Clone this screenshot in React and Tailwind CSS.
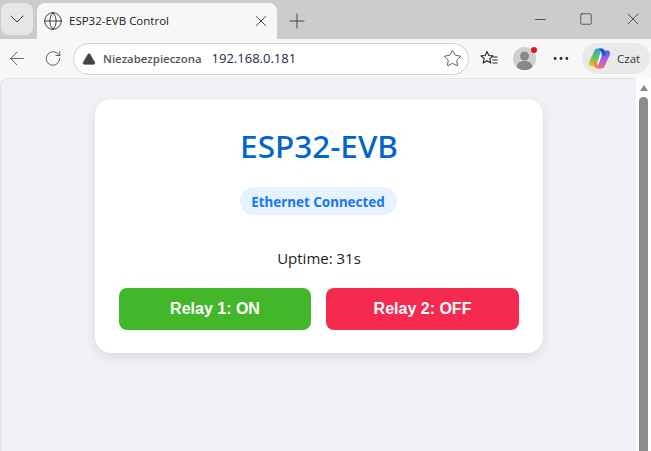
import { ChevronDown, Globe, X, Plus, Minus, Square, ArrowLeft, RotateCw, Star, TriangleAlert, Ellipsis } from 'lucide-react';

const ui = "font-['Open_Sans','Noto_Sans',sans-serif]";

function FavoritesIcon() {
  return (
    <svg width="20" height="20" viewBox="0 0 20 20" fill="none" stroke="#222" strokeWidth="1.1">
      <path d="M8 2.500l1.800 4 4.200.4-3.200 2.800 1 4.300L8 11.800l-3.800 2.200 1-4.300L2 6.900l4.200-.4z" strokeLinejoin="round" />
      <path d="M13.500 8h5M13.500 11h5M13.500 14h5" />
    </svg>
  );
}

function ProfileIcon() {
  return (
    <div className="relative w-[23px] h-[23px]">
      <svg width="23" height="23" viewBox="0 0 23 23">
        <circle cx="11.500" cy="11.500" r="11.500" fill="#d2d0ce" />
        <circle cx="11.500" cy="9" r="4.500" fill="#8a8886" />
        <path d="M3.500 20c1-4.500 4-6 8-6s7 1.500 8 6a11.500 11.500 0 0 1-16 0z" fill="#8a8886" />
      </svg>
      <div className="absolute top-0 right-[-1px] w-[6px] h-[6px] rounded-full bg-[#e81123]" />
    </div>
  );
}

function CopilotIcon() {
  return (
    <svg width="23" height="23" viewBox="0 0 23 23">
      <defs>
        <linearGradient id="cpA" x1="0.3" y1="0" x2="0.3" y2="1">
          <stop offset="0" stopColor="#22a6d8" />
          <stop offset="0.55" stopColor="#6cc850" />
          <stop offset="1" stopColor="#f3c62d" />
        </linearGradient>
        <linearGradient id="cpB" x1="0.4" y1="0" x2="0.6" y2="1">
          <stop offset="0" stopColor="#2a6fe8" />
          <stop offset="0.5" stopColor="#b45be0" />
          <stop offset="1" stopColor="#f0707a" />
        </linearGradient>
      </defs>
      <path d="M6.500 3.500C7 2.200 8 1.500 9.500 1.500h4L9.500 16c-.5 2-1.700 3.500-3.500 3.500H3.500C1.500 19.500.5 17.500 1 15.500z" fill="url(#cpA)" />
      <path d="M16.500 19.500c-.5 1.300-1.500 2-3 2h-4L13.500 7c.5-2 1.700-3.500 3.500-3.500h2.500c2 0 3 2 2.500 4z" fill="url(#cpB)" />
      <path d="M10.500 1.500h3c1.600 0 2.600.8 3 2.200L18 8.500h-3.500l-1.300-3.800c-.4-1.200-1.200-2.400-2.700-3.200z" fill="#1b56d8" />
      <path d="M12.500 21.500h-3c-1.600 0-2.600-.8-3-2.200L5 14.500h3.500l1.300 3.800c.4 1.200 1.200 2.400 2.700 3.200z" fill="#f58a3c" />
      <path d="M13 8l-2.800 8" stroke="#ffffff" strokeWidth="1.600" strokeLinecap="round" />
    </svg>
  );
}

function TabStrip() {
  return (
    <div className="h-[39px] bg-[#cccccc] flex items-end shrink-0">
      <div className="ml-[1px] mb-[4px] w-[32px] h-[32px] rounded-lg bg-[#e6e6e6] flex items-center justify-center">
        <ChevronDown size={24} strokeWidth={0.9} color="#222" />
      </div>
      <div className="ml-[4px] w-[240px] h-[36px] bg-[#f7f7f7] rounded-t-lg flex items-center pl-[6px] pr-[7px]">
        <Globe size={20} strokeWidth={1} color="#222" />
        <span className={`ml-[6px] text-[11.500px] text-[#222] flex-1 ${ui}`}>ESP32-EVB Control</span>
        <X size={18} strokeWidth={1.1} color="#222" />
      </div>
      <div className="ml-[8px] mb-[6px] flex items-center">
        <Plus size={24} strokeWidth={1} color="#444" />
      </div>
      <div className="ml-auto mb-[10px] mr-[8px] flex items-center">
        <Minus size={17} strokeWidth={0.9} color="#111" />
        <Square size={14} strokeWidth={1} color="#111" className="ml-[30px]" />
        <X size={20} strokeWidth={0.8} color="#111" className="ml-[30px]" />
      </div>
    </div>
  );
}

function Toolbar() {
  return (
    <div className="h-[39px] bg-[#f7f7f7] flex items-center shrink-0">
      <div className="ml-[6px] w-[22px] flex justify-center"><ArrowLeft size={27} strokeWidth={0.8} color="#333" /></div>
      <div className="ml-[16px] w-[18px] flex justify-center"><RotateCw size={19} strokeWidth={1} color="#333" /></div>
      <div className="ml-[11px] w-[396px] h-[32px] bg-white rounded-full border border-[#d2d2d2] flex items-center pl-[8px] pr-[6px]">
        <TriangleAlert size={14} fill="#444" color="#444" strokeWidth={1.2} />
        <span className={`ml-[7px] text-[11.400px] font-semibold text-[#555] ${ui}`}>Niezabezpieczona</span>
        <span className={`ml-[10px] text-[13px] pt-[1px] text-[#1a2a4a] ${ui}`}>192.168.0.181</span>
        <Star size={19} strokeWidth={1} color="#333" className="ml-auto" />
      </div>
      <div className="ml-[10px] w-[20px] flex justify-center"><FavoritesIcon /></div>
      <div className="ml-[14px]"><ProfileIcon /></div>
      <div className="ml-[15px] w-[20px] flex justify-center"><Ellipsis size={21} strokeWidth={1.5} color="#222" /></div>
      <div className="ml-[11px] w-[68px] h-[31px] rounded-full bg-[#e9e9e9] flex items-center pl-[6px]">
        <CopilotIcon />
        <span className={`ml-[6px] text-[11.500px] text-[#333] ${ui}`}>Czat</span>
      </div>
    </div>
  );
}

function Scrollbar() {
  return (
    <div className="w-[15px] shrink-0 bg-[#fdfdfd] flex flex-col items-center pt-[7px]">
      <div className="w-0 h-0 border-l-[4.500px] border-r-[4.500px] border-b-[6px] border-l-transparent border-r-transparent border-b-[#8a8a8a]" />
      <div className="mt-[6px] w-[9px] flex-1 rounded-t-full bg-[#8b8b8b]" />
    </div>
  );
}

function RelayButton({ label, color, width }) {
  return (
    <button className={`h-[42px] rounded-lg text-white text-[16px] font-bold font-['Liberation_Sans',sans-serif] ${width} ${color}`}>
      {label}
    </button>
  );
}

export default function App() {
  return (
    <div className="w-[651px] h-[451px] overflow-hidden flex flex-col bg-[#f7f7f7]">
      <TabStrip />
      <Toolbar />
      <div className="flex-1 flex min-h-0">
        <div className="flex-1 bg-[#f0f2f5] rounded-tl-lg border-l border-t border-[#e4e4e4] pt-[20px] pl-[94px]">
          <div className={`w-[448px] h-[254px] bg-white rounded-2xl shadow-[0_4px_12px_rgba(0,0,0,0.1)] pt-[24px] px-[24px] flex flex-col items-center ${ui}`}>
            <h1 className="text-[31.500px] leading-[46px] font-medium text-[#0066cc] font-['Noto_Sans',sans-serif]">ESP32-EVB</h1>
            <div className="mt-[18px] mr-[2px] w-[157px] h-[28px] rounded-full bg-[#e6f2ff] flex items-center justify-center pt-[2px] text-[13.400px] font-bold text-[#1877f2] font-['Noto_Sans',sans-serif]">
              Ethernet Connected
            </div>
            <div className="mt-[32px] text-[15px] leading-[22px] text-[#222]">Uptime: 31s</div>
            <div className="mt-[19px] w-full flex justify-between">
              <RelayButton label="Relay 1: ON" color="bg-[#42b72a]" width="w-[192px]" />
              <RelayButton label="Relay 2: OFF" color="bg-[#f42a4e]" width="w-[193px]" />
            </div>
          </div>
        </div>
        <Scrollbar />
      </div>
    </div>
  );
}
